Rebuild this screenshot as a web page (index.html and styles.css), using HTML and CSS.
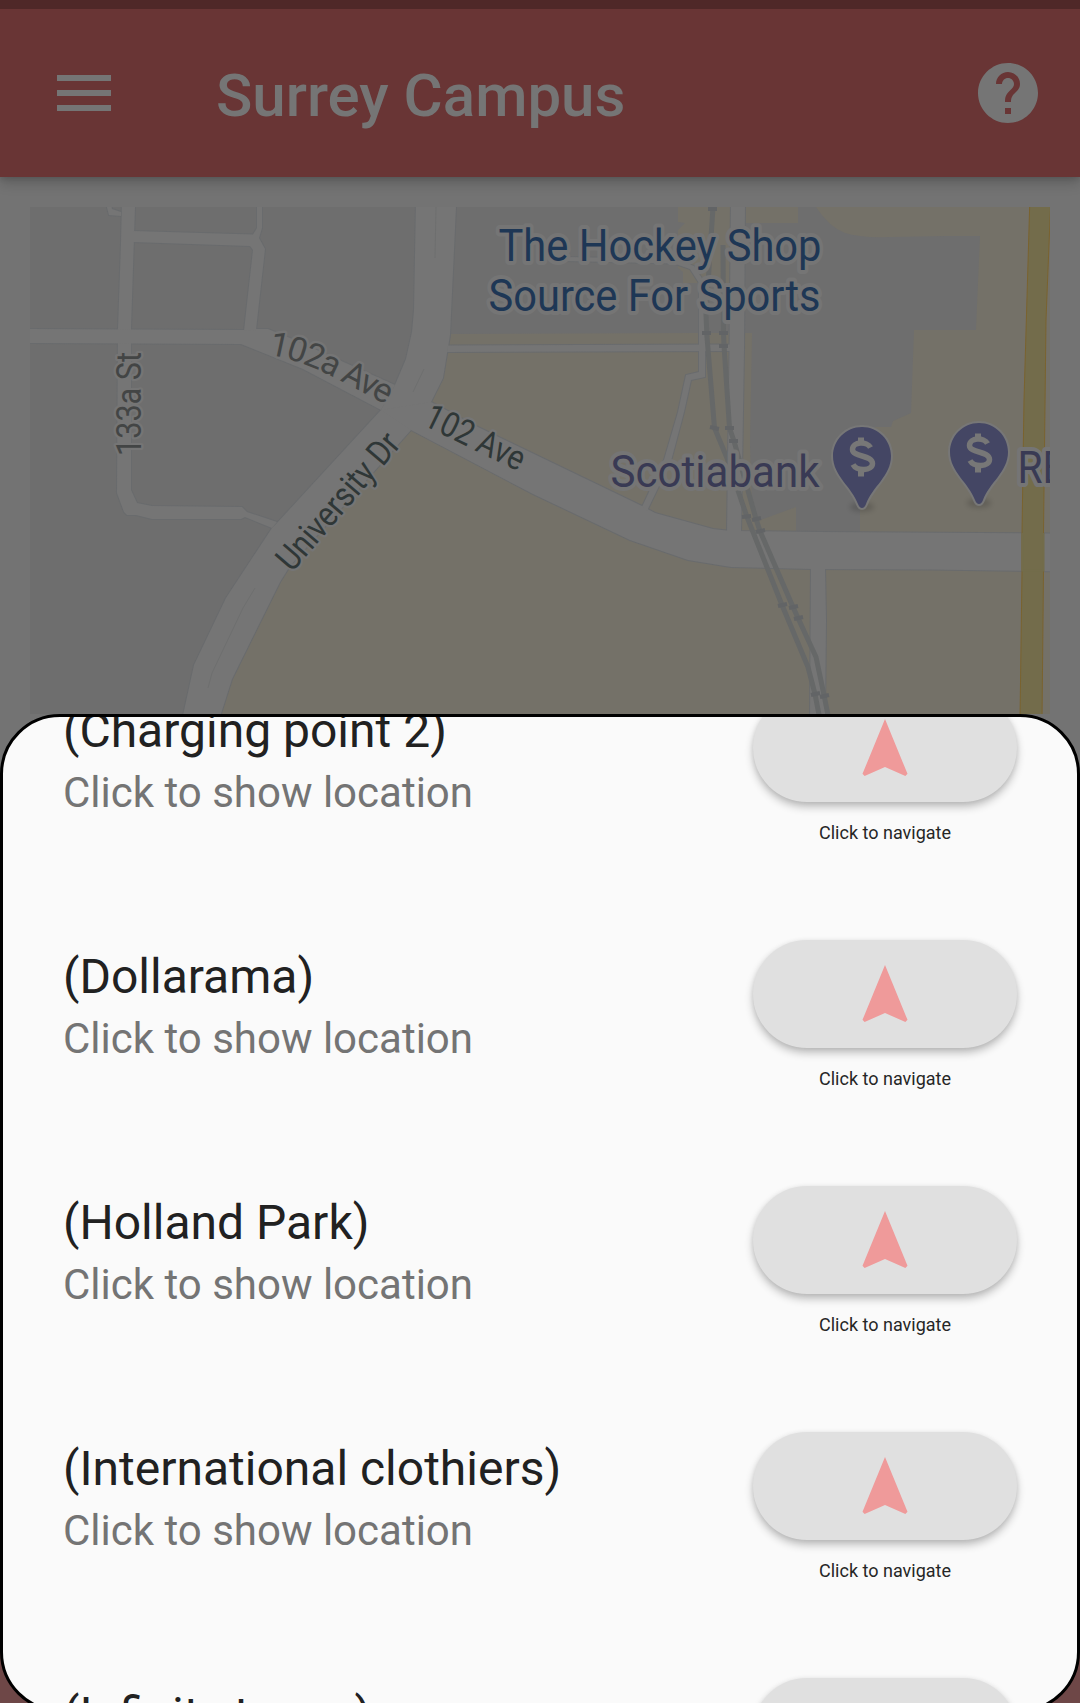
FILE: index.html
```html
<!DOCTYPE html>
<html lang="en">
<head>
<meta charset="utf-8">
<title>Surrey Campus</title>
<link rel="stylesheet" href="styles.css">
</head>
<body>
<div class="app">
  <div class="status-bar"></div>
  <header class="app-bar">
    <svg class="icon" viewBox="0 0 24 24"><path d="M3 18h18v-2H3v2zm0-5h18v-2H3v2zm0-7v2h18V6H3z"/></svg>
    <h1 class="app-title">Surrey Campus</h1>
    <svg class="icon" viewBox="0 0 24 24"><path d="M12 2C6.48 2 2 6.48 2 12s4.48 10 10 10 10-4.480 10-10S17.520 2 12 2zm1 17h-2v-2h2v2zm2.070-7.750l-.9.920C13.450 12.900 13 13.500 13 15h-2v-.5c0-1.100.45-2.100 1.170-2.830l1.240-1.260c.37-.36.59-.86.59-1.410 0-1.100-.9-2-2-2s-2 .9-2 2H8c0-2.210 1.790-4 4-4s4 1.790 4 4c0 .88-.36 1.680-.93 2.250z"/></svg>
  </header>
  <main class="content">
    <svg class="map" viewBox="30 207 1020 507">
      <defs>
        <g id="roads">
          <path d="M122 200L121 243L118 329L117 493L124 512L127 515L136 515L152 519L241 519L245 517L272 528L277 522L247 512L242 507L152 506L137 503L131 490L131 329L135 207V200z"/>
          <path d="M25 329L243 330L256 329H268L290 338L395 385L381 410L303 369L241 344L25 343z"/>
          <path d="M133 231L253 234.500L257 228V200H262V228L259 238L265 249L256 330L244 331L253 250L250 246L133 242z"/>
          <path d="M105 200L109 215L121 216V212L112 209L110 200z"/>
          <path d="M416 200L414 310L412 332L406 359L395 385L381 410L277 523L272 528L226 598L194 665L182 720H219L232 679L280 582L290 566L411 430L431 402L443 378L450 335L456 207V200z"/>
          <path d="M431 402L478 427L642 506L655 513L713 529L731 531L820 532L1060 533.500V571.500L930 569.500L811 569L731 567L688 560L630 540L533 494L411 430L381 410z"/>
          <path d="M448 345.500L730 344.500V351L447 352z"/>
          <path d="M731 200L729.500 350L727 533H741L744 350L745 200z"/>
          <path d="M811 567L810 720H825L826 620L825 567z"/>
          <path d="M566 261L674 263.500L690 269L699 283V372L686 375L678 412L664 460L642 507L647 511L671 461L684 412L691 380L705 377V283L694 266L676 259L566 257z"/>
        </g>
        <g id="pin">
          <ellipse class="pin-shadow" cx="0" cy="51" rx="12" ry="5"/>
          <path class="pin-body" d="M0-29C-16-29-29-16-29 0C-29 20-10 31-4 48Q-2.500 52 0 52Q2.500 52 4 48C10 31 29 20 29 0C29-16 16-29 0-29z"/>
          <path class="pin-sign" d="M8.500-8.500C5-15-9.500-14.500-9.500-6.500C-9.500 1.500 10.500-1.500 10.500 7.500C10.500 15-5 15.500-9 8.500"/>
          <path class="pin-bar" d="M-1-18.500V-12M-1 13V20.500"/>
        </g>
        <path id="ave-a" d="M268 354.500Q296 359 328 374.500L395 409"/>
        <filter id="soft" x="-50%" y="-100%" width="200%" height="300%"><feGaussianBlur stdDeviation="2.500"/></filter>
      </defs>
      <g class="district">
        <path d="M411 430L533 494L630 540L688 560L731 567L1050 571V720H218L232 679L280 582L290 566z"/>
        <path d="M431 402L443 378L451 334L698 333H731V531L713 529L655 513L642 506L478 427z"/>
        <path d="M743 333H752L750 445L752 505L758 521L796 507V532H740z"/>
        <path d="M678 207H731V283H683V272L678 268V230L685 223L678 222z"/>
        <path d="M745 207H798V223H745z"/>
        <path d="M816 207Q829 227 845 233Q860 238 890 237L945 236H980L976 330H914L911 413L893 421L891 427H875L860 460V532L1050 533V207z"/>
        <path d="M697 333H743V350H697z"/>
      </g>
      <use href="#roads" class="road-edge"/>
      <use href="#roads" class="road"/>
      <path class="lane" d="M436 207L435 258M424 369L413 392M255 588L243 608L212 673L208 688"/>
      <path class="highway" d="M1030 195L1024 400L1022 533V571L1020 720H1042L1043.500 571V533L1046 320L1051 195z"/>
      <path class="highway-cross" d="M1022.500 534H1043.500V570.500H1022.500z"/>
      <path class="rail" d="M713 207L706 315L707 337L714.500 428L727 458L747 517L782 605L808 667L815 694L820 720M723 245L723.500 332L724 345L729.500 428L734 441L756 519L760 531L793 607L798 618L816 657L824 695L829 720"/>
      <path class="tie" d="M708 209H717M702 333H711M719 333H728M719 346H728M710 427L719 429M725 428H734M729 441H738M742 517L751 516M752 520L761 518M756 532L765 530M778 606L787 604M789 608L798 606M794 619L803 617M811 695L820 693M820 697L829 695"/>
      <g class="label place">
        <text x="498.500" y="261" textLength="323" lengthAdjust="spacingAndGlyphs">The Hockey Shop</text>
        <text x="488.500" y="311" textLength="332" lengthAdjust="spacingAndGlyphs">Source For Sports</text>
      </g>
      <g class="label bank">
        <text x="610.500" y="486.500" textLength="209" lengthAdjust="spacingAndGlyphs">Scotiabank</text>
        <text x="1017.500" y="483" textLength="77" lengthAdjust="spacingAndGlyphs">RBC</text>
      </g>
      <g class="label street minor">
        <text transform="translate(141 456) rotate(-90)" textLength="104" lengthAdjust="spacingAndGlyphs">133a St</text>
        <text class="curved"><textPath href="#ave-a">102a Ave</textPath></text>
      </g>
      <g class="label street">
        <text transform="translate(422 424.500) rotate(26)" textLength="107" lengthAdjust="spacingAndGlyphs">102 Ave</text>
        <text transform="translate(292 573) rotate(-49.400)" textLength="169" lengthAdjust="spacingAndGlyphs">University Dr</text>
      </g>
      <use href="#pin" x="862" y="456"/>
      <use href="#pin" x="979" y="452"/>
    </svg>
  </main>
  <div class="bottom-bar"></div>
</div>

<section class="sheet">
  <ul class="places">
    <li class="row">
      <div class="info"><h2 class="name">(Charging point 2)</h2><p class="hint">Click to show location</p></div>
      <div class="action"><button class="go"><svg class="arrow" viewBox="0 0 24 24"><path d="M12 2L4.500 20.290l.71.71L12 18l6.790 3 .71-.71z"/></svg></button><span class="caption">Click to navigate</span></div>
    </li>
    <li class="row">
      <div class="info"><h2 class="name">(Dollarama)</h2><p class="hint">Click to show location</p></div>
      <div class="action"><button class="go"><svg class="arrow" viewBox="0 0 24 24"><path d="M12 2L4.500 20.290l.71.71L12 18l6.790 3 .71-.71z"/></svg></button><span class="caption">Click to navigate</span></div>
    </li>
    <li class="row">
      <div class="info"><h2 class="name">(Holland Park)</h2><p class="hint">Click to show location</p></div>
      <div class="action"><button class="go"><svg class="arrow" viewBox="0 0 24 24"><path d="M12 2L4.500 20.290l.71.71L12 18l6.790 3 .71-.71z"/></svg></button><span class="caption">Click to navigate</span></div>
    </li>
    <li class="row">
      <div class="info"><h2 class="name">(International clothiers)</h2><p class="hint">Click to show location</p></div>
      <div class="action"><button class="go"><svg class="arrow" viewBox="0 0 24 24"><path d="M12 2L4.500 20.290l.71.71L12 18l6.790 3 .71-.71z"/></svg></button><span class="caption">Click to navigate</span></div>
    </li>
    <li class="row">
      <div class="info"><h2 class="name">(Infinity tower)</h2></div>
      <div class="action"><button class="go"></button></div>
    </li>
  </ul>
</section>
</body>
</html>
```
FILE: styles.css
```css
* { box-sizing: border-box; margin: 0; padding: 0; }

body {
  position: relative;
  height: 1703px;
  overflow: hidden;
  font-family: Roboto, sans-serif;
}

.app {
  display: flex;
  flex-direction: column;
  height: 1703px;
  background: #737373;
}

.status-bar { height: 9px; background: #4f2828; position: relative; z-index: 2; }

.app-bar {
  position: relative;
  z-index: 1;
  display: flex;
  align-items: center;
  height: 168px;
  padding: 0 36px 0 48px;
  background: #693535;
  box-shadow: 0 6px 12px rgba(0, 0, 0, .18), 0 2px 5px rgba(0, 0, 0, .1);
}

.icon { width: 72px; height: 72px; fill: #757575; }

.app-title {
  flex: 1;
  margin-left: 96px;
  padding-top: 6px;
  font-size: 60px;
  font-weight: 500;
  line-height: 70px;
  color: #757575;
}

.content { flex: 1; padding: 30px 30px 0; }

.bottom-bar { height: 168px; background: #6e4747; }

.map { display: block; width: 1020px; height: 507px; background: #6e6e6e; }
.district { fill: #747168; }
.road-edge { fill: none; stroke: #696b6d; stroke-width: 2; }
.road { fill: #757575; }
.lane { fill: none; stroke: #6e6f6f; stroke-width: 1; }
.highway { fill: #736c4b; stroke: #7a632f; stroke-width: 1; }
.highway-cross { fill: #736c4b; stroke: #736c4b; stroke-width: 2; }
.rail { fill: none; stroke: #666868; stroke-width: 5; }
.tie { fill: none; stroke: #626466; stroke-width: 4; }

.label { stroke: #757575; stroke-width: 8; stroke-linejoin: round; paint-order: stroke; }
.place { fill: #1e3755; font-size: 45px; }
.bank { fill: #393a54; font-size: 45px; }
.street { fill: #2f3737; font-size: 35px; stroke-width: 5; }
.minor { fill: #434545; }
.curved { font-size: 34px; letter-spacing: -1.600px; }

.pin-shadow { fill: #000; opacity: .15; filter: url(#soft); }
.pin-body { fill: #444664; stroke: #777; stroke-width: 4; paint-order: stroke; }
.pin-sign { fill: none; stroke: #777; stroke-width: 5.500; }
.pin-bar { fill: none; stroke: #777; stroke-width: 6; }

.sheet {
  position: absolute;
  top: 714px;
  left: 0;
  width: 1080px;
  height: 998px;
  overflow: hidden;
  border: 3px solid #000;
  border-radius: 60px;
  background: #fafafa;
}

.places { list-style: none; margin-top: -23px; }

.row {
  display: flex;
  justify-content: space-between;
  height: 246px;
  padding: 0 60px;
}

.info { display: flex; flex-direction: column; gap: 9px; padding-top: 9px; }
.name { font-size: 48px; font-weight: 400; line-height: 56px; color: #212121; }
.hint { font-size: 42px; line-height: 49px; color: #747474; }

.action { display: flex; flex-direction: column; align-items: center; gap: 20px; }

.go {
  display: flex;
  align-items: center;
  justify-content: center;
  width: 264px;
  height: 108px;
  border: 0;
  border-radius: 54px;
  background: #e0e0e0;
  box-shadow: 0 5px 8px rgba(0, 0, 0, .24), 0 1px 5px rgba(0, 0, 0, .08);
}

.arrow { width: 72px; height: 72px; margin-top: 2px; fill: #ef9a9a; }
.caption { font-size: 18px; line-height: 21px; color: #262626; }
```
